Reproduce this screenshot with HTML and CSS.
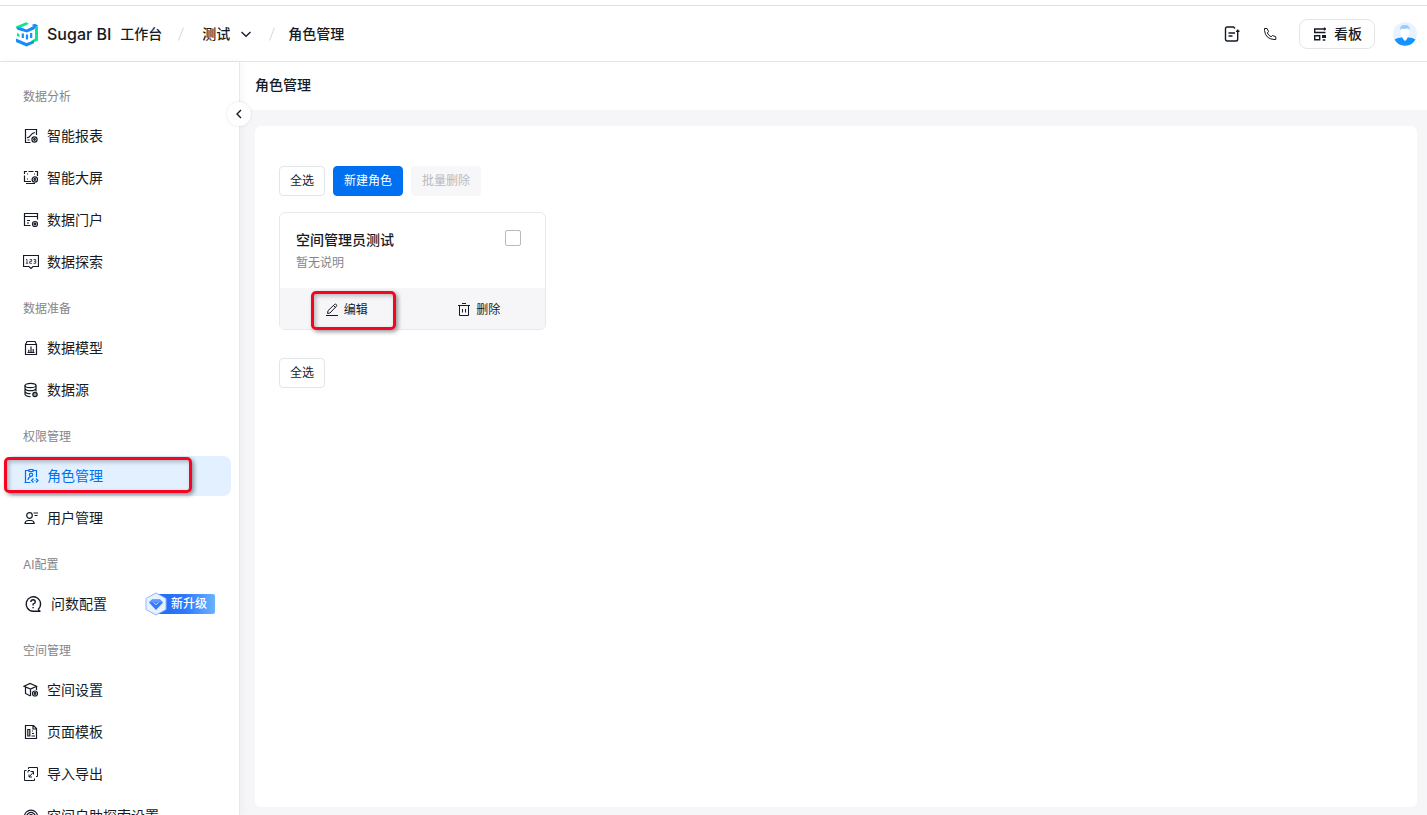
FILE: index.html
```html
<!DOCTYPE html>
<html lang="zh-CN">
<head>
<meta charset="utf-8">
<title>角色管理 - Sugar BI</title>
<link rel="stylesheet" href="styles.css">
</head>
<body>
<header class="topbar">
  <a class="brand" href="#">
    <svg class="logo" viewBox="0 0 24 26" width="24" height="26">
      <path d="M1 5.500 11 1.200 14 2.800 5 7 1 7.200z" fill="#0be592"/>
      <path d="M1.500 6.800 6 6.500 11.500 8.500 18.500 5 16.500 4 20 2.800 23 4.500 19 8.500 12 11.500 2.500 8.800z" fill="#168cff"/>
      <path d="M20 6.500 23 5V19.500L16 22.500V20L20 17.500z" fill="#0be592"/>
      <path d="M2 12 4.500 13.200V16L2 15z" fill="#0be592"/>
      <path d="M7.800 12.500V17M12 13.500V18.500M16.200 12V17" stroke="#168cff" stroke-width="2.200"/>
      <path d="M1 17.500 11.500 22 19 19.500V22.300L11.500 25.500 1 21z" fill="#168cff"/>
    </svg>
    <span class="brand-name">Sugar BI</span><span class="brand-area">工作台</span>
  </a>
  <nav class="crumbs" aria-label="面包屑">
    <svg class="slash" viewBox="0 0 6 14" width="6" height="14"><path d="M5.500.5.500 13.500"/></svg>
    <button class="space-switch" type="button">测试
      <svg class="icon" viewBox="0 0 12 12" width="12" height="12"><path d="M1.500 4 6 8.300 10.500 4"/></svg>
    </button>
    <svg class="slash" viewBox="0 0 6 14" width="6" height="14"><path d="M5.500.5.500 13.500"/></svg>
    <a class="crumb" href="#">角色管理</a>
  </nav>
  <div class="tools">
    <button class="tool" type="button" aria-label="文档">
      <svg class="icon bold" viewBox="0 0 16 16" width="16" height="16"><path d="M13.700 7v6.200q0 1.800-1.800 1.800H3.300q-1.800 0-1.800-1.800V2.800Q1.500 1 3.300 1H9.500L11 2.500M4.500 7h6.500M4.500 10h4M12 5.200h3.500M13.700 3.500v4"/></svg>
    </button>
    <button class="tool" type="button" aria-label="电话">
      <svg class="icon" viewBox="0 0 16 16" width="16" height="16"><path d="M2.500 2.500h2.600L6.500 5.500 5.300 7q1.300 2.500 3.800 3.800L10.500 9.500l3.300 1.300v2.700H12Q3.500 13 2.500 4.500z"/></svg>
    </button>
    <button class="board" type="button">
      <svg class="icon bold" viewBox="0 0 14 14" width="14" height="14"><path d="M13 2H1.700V5.500H12.500M11.500.5v3M1.700 8.700h5v4h-5zM9.700 8.700h2.600v1.600H9.700zM9.700 13h2.600"/></svg>
      看板
    </button>
    <button class="avatar" type="button" aria-label="账户">
      <svg viewBox="0 0 24 24" width="24" height="24"><circle cx="12" cy="12" r="12" fill="#e9f2ff"/><path d="M1.500 17.500Q5 15.300 9 15.500l3 3 3-3q4-.2 7.500 2A12 12 0 0 1 1.500 17.500z" fill="#1492ff"/><path d="M7.500 7h9v4q-.5 3.500-2.500 4.500V17L12 19 10 17v-1.500Q8 14.500 7.500 11z" fill="#fff"/><path d="M7.500 8.500Q6 3 11.500 3q6-.5 5 5.500l-1.500-2.300Q11 7.500 8.500 6.500z" fill="#9acbff"/></svg>
    </button>
  </div>
</header>

<div class="layout">
  <aside class="sidebar">
    <nav class="menu" aria-label="主菜单">
      <h2 class="group">数据分析</h2>
      <a class="item" href="#"><svg class="icon menu-icon" viewBox="0 0 16 16" width="16" height="16"><path d="M7.500 14.500h-5v-13h11V7M4 9.500q2 .5 3.500-2T12 4.500M4.500 12H6.500"/><circle cx="11.500" cy="11.500" r="2.600"/><circle cx="11.500" cy="11.500" r=".8"/></svg>智能报表</a>
      <a class="item" href="#"><svg class="icon menu-icon" viewBox="0 0 16 16" width="16" height="16"><path d="M1.500 4V1.500H4M12 1.500h2.500V6M5.500 1.500h5M1.500 5.500v6H8M4 4h1M11 4h1M4 9h1M3 13.500h9"/><circle cx="11.800" cy="9.500" r="2.700"/><circle cx="11.800" cy="9.500" r=".8"/></svg>智能大屏</a>
      <a class="item" href="#"><svg class="icon menu-icon" viewBox="0 0 16 16" width="16" height="16"><path d="M7.500 13.500h-6v-12h13V7.500M1.500 4.500h13M4 8.500h3M4 11h2"/><circle cx="12" cy="12" r="2.500"/><circle cx="12" cy="12" r=".8"/></svg>数据门户</a>
      <a class="item" href="#"><svg class="icon menu-icon" viewBox="0 0 16 16" width="16" height="16"><path d="M.5 1.500h15v11h-5.500L8 14.500 6 12.500H.5z"/><path class="fine" d="M3 5.500h1V9M2.800 9.300h2.400M6.700 5.500h2v1.800h-2v2h2.200M10.500 5.500h2.200v3.800h-2.200M11 7.300h1.500"/></svg>数据探索</a>

      <h2 class="group">数据准备</h2>
      <a class="item" href="#"><svg class="icon menu-icon" viewBox="0 0 16 16" width="16" height="16"><path d="M2.500 4.500h11v10h-11zM2.500 4.500 4 1.500h8l1.500 3M4.500 12.500h7M5.800 12V9.800M8 12V6.500M10.200 12V9"/></svg>数据模型</a>
      <a class="item" href="#"><svg class="icon menu-icon" viewBox="0 0 16 16" width="16" height="16"><ellipse cx="7.500" cy="3.500" rx="5.500" ry="2.200"/><path d="M2 3.500v9q1 2 5.500 2.200M13 3.500v6M2 6.500q1 2.200 5.500 2.200T13 6.500M2 9.500q1 2.200 5.500 2.200"/><circle cx="12" cy="12.500" r="2.200" fill="#9ca1a9"/></svg>数据源</a>

      <h2 class="group">权限管理</h2>
      <a class="item active" href="#" aria-current="page"><svg class="icon menu-icon" viewBox="0 0 16 16" width="16" height="16"><path d="M7.500 14.500h-6M2.500 14V2.500H6M10 2.500h3.500V9M6 1.500h4v2H6zM5 12q.2-3 3-3.500"/><circle cx="8" cy="6.800" r="1.600"/><path d="M10.500 10.500 8.500 12.500l2 2M13 10.500l2 2-2 2M11.500 12.500h.8"/></svg>角色管理<span class="mark mark-menu"></span></a>
      <a class="item" href="#"><svg class="icon menu-icon" viewBox="0 0 16 16" width="16" height="16"><circle cx="6.500" cy="5.500" r="2.800"/><path d="M2 13.500q.3-3 3.200-3h2.800q2.900 0 3.200 3zM10.500 3h4.500M11.500 5.500h3"/></svg>用户管理</a>

      <h2 class="group">AI配置</h2>
      <a class="item wide" href="#"><svg class="icon bold" viewBox="0 0 20 20" width="20" height="20"><path d="M15 15.500A7.200 7.200 0 1 0 10 17.200h7.500M15 15.500l2 1.500M7.800 8q.2-2.300 2.300-2.300T12.300 8q0 1.300-2.200 2.200v1.300M10.100 13v1.200"/></svg>问数配置
        <span class="upgrade"><svg class="gem" viewBox="0 0 22 24" width="22" height="24"><path d="M11 1 21 6.500v11L11 23 1 17.500v-11z" fill="#e9f1ff" stroke="#8eb8ff"/><path d="M7 7.500h8l3 3-7 7.500-7-7.500z" fill="#3478ff"/><path d="M4 10.500h14l-3-3H7z" fill="#5c98ff"/><path d="M8.500 10.500 11 12.800l2.500-2.300" fill="none" stroke="#bcd4ff"/></svg>新升级</span>
      </a>

      <h2 class="group">空间管理</h2>
      <a class="item" href="#"><svg class="icon menu-icon" viewBox="0 0 16 16" width="16" height="16"><path d="M7.500 14 2.500 11.500V5M1 4.200 7 1.500l6.500 2.700L7.500 7zM7.500 7v7M13.500 4.500V8"/><circle cx="12" cy="11.500" r="2.500"/><circle cx="12" cy="11.500" r=".8"/></svg>空间设置</a>
      <a class="item" href="#"><svg class="icon menu-icon" viewBox="0 0 16 16" width="16" height="16"><path d="M2.500 1.500h8l3 3v10h-11zM10 1.500v3.500h3.500M4.800 5.500h2v6.500h-2zM9 7h1M9 9.500h2M8.500 12h3.500"/></svg>页面模板</a>
      <a class="item" href="#"><svg class="icon" viewBox="0 0 16 16" width="16" height="16"><path d="M5.500 3V1.500h9v9H13M3.500 4.500h-2v10h10v-2M5 5v1.500M5 4.500H7M6 11l4.500-5M7.500 5.500h3v3M6 8.500V11h3"/></svg>导入导出</a>
      <a class="item" href="#"><svg class="icon menu-icon" viewBox="0 0 16 16" width="16" height="16"><path d="M3 13A6.600 6.600 0 1 1 13 13M4.500 11A4.200 4.200 0 1 1 11.500 11"/><circle cx="8" cy="8.500" r="1.800"/></svg>空间自助探索设置</a>
    </nav>
    <button class="collapse" type="button" aria-label="收起菜单"><svg class="icon bold" viewBox="0 0 12 12" width="12" height="12"><path d="M8 2 4 6l4 4"/></svg></button>
  </aside>

  <main class="main">
    <h1 class="title">角色管理</h1>
    <div class="content">
      <section class="panel">
        <div class="actions">
          <button class="btn" type="button">全选</button>
          <button class="btn primary" type="button">新建角色</button>
          <button class="btn" type="button" disabled>批量删除</button>
        </div>
        <article class="card">
          <div class="card-body">
            <div>
              <label class="card-name" for="role">空间管理员测试</label>
              <p class="card-note">暂无说明</p>
            </div>
            <input class="check" type="checkbox" id="role">
          </div>
          <footer class="card-foot">
            <button class="act" type="button"><svg class="icon" viewBox="0 0 14 14" width="14" height="14"><path d="M1 12.500h12M2.500 10.500 3 7.700 9.500 1.500q1-.8 1.800 0t0 1.800L5 10zM8.500 2.500l2 2"/></svg>编辑<span class="mark mark-edit"></span></button>
            <button class="act" type="button"><svg class="icon" viewBox="0 0 14 14" width="14" height="14"><path d="M1 2.500h12M5 .5h4M2.500 2.500v10h9v-10M5.500 6v3.500M8.500 6v3.500"/></svg>删除</button>
          </footer>
        </article>
        <div class="actions"><button class="btn" type="button">全选</button></div>
      </section>
    </div>
  </main>
</div>
</body>
</html>
```

FILE: styles.css
```css
* { box-sizing: border-box; }

body {
  margin: 0;
  height: 100vh;
  padding-top: 5px;
  display: flex;
  flex-direction: column;
  overflow: hidden;
  background: #fff;
  color: #151b26;
  font: 14px/20px Inter, "Noto Sans CJK SC", sans-serif;
}

a { color: inherit; text-decoration: none; }
button { margin: 0; padding: 0; border: 0; background: none; color: inherit; font: inherit; cursor: pointer; }
h1, h2, p { margin: 0; }
svg { display: block; flex: none; }
.icon { fill: none; stroke: currentColor; stroke-width: 1; }
.icon.bold { stroke-width: 1.4; }
.menu-icon { stroke-width: 1.2; }
.icon .fine { stroke-width: 0.8; }

/* Top bar */
.topbar {
  flex: none;
  display: flex;
  align-items: center;
  height: 57px;
  padding: 0 10px 0 15px;
  border-top: 1px solid #dfe0e2;
  border-bottom: 1px solid #e4e5e7;
  font-weight: 500;
}
.brand { display: flex; align-items: center; }
.brand-name { margin: 0 9px 0 8px; font-size: 16px; }
.crumbs { display: flex; align-items: center; margin-left: 16px; }
.slash { fill: none; stroke: #d4d6d9; }
.space-switch { display: flex; align-items: center; gap: 10px; margin: 0 17px 0 18px; }
.space-switch .icon { stroke-width: 1.3; }
.crumb { margin-left: 13px; }
.tools { display: flex; align-items: center; margin-left: auto; }
.tool { margin-right: 22px; }
.tool + .board { margin-left: -1px; }
.board {
  display: flex;
  align-items: center;
  gap: 7px;
  height: 30px;
  padding: 0 12px 0 13px;
  border: 1px solid #e4e5e7;
  border-radius: 8px;
}
.avatar { margin-left: 18px; }

/* Side menu */
.layout { flex: 1; min-height: 0; display: flex; }
.sidebar {
  position: relative;
  z-index: 1;
  flex: none;
  width: 240px;
  background: #fff;
  border-right: 1px solid #e8e9eb;
  box-shadow: 2px 0 8px rgba(0, 0, 0, 0.04);
}
.menu { height: 100%; padding: 10px 8px 0 7px; overflow: hidden; }
.group { height: 44px; padding: 15px 0 0 16px; color: #84868c; font-size: 12px; font-weight: 400; }
.item {
  position: relative;
  display: flex;
  align-items: center;
  gap: 8px;
  height: 40px;
  margin-bottom: 2px;
  padding: 0 16px;
  border-radius: 8px;
}
.item.active { background: #e2f0ff; color: #0070f0; }
.upgrade {
  position: relative;
  margin-left: auto;
  padding: 0 8px 0 26px;
  background: linear-gradient(90deg, #2468f2, #2d78ff 50%, #68b3ff) right / calc(100% - 10px) 100% no-repeat;
  border-radius: 2px;
  color: #fff;
  font-size: 12px;
  font-weight: 500;
}
.gem { position: absolute; left: 0; top: -2px; }
.collapse {
  position: absolute;
  top: 40px;
  right: -12px;
  display: grid;
  place-items: center;
  width: 24px;
  height: 24px;
  border-radius: 50%;
  background: #fff;
  box-shadow: 0 0 3px rgba(0, 0, 0, 0.12);
}

/* Callout frames */
.mark {
  position: absolute;
  border: 3px solid #f5051f;
  border-radius: 5px;
  box-shadow: 2px 2px 4px rgba(0, 0, 0, 0.4), inset 2px 2px 4px rgba(0, 0, 0, 0.25);
  pointer-events: none;
}
.mark-menu { top: 1px; bottom: 3px; left: -3px; right: 39px; }
.mark-edit { top: 3px; bottom: -1px; left: 31px; right: 17px; }

/* Page */
.main { flex: 1; min-width: 0; display: flex; flex-direction: column; background: #f6f6f9; }
.title { flex: none; padding: 13px 15px 15px; background: #fff; font-size: 14px; font-weight: 500; }
.content { flex: 1; display: flex; padding: 16px 10px 8px 15px; }
.panel { flex: 1; padding: 40px 24px; background: #fff; border-radius: 6px; }
.actions { display: flex; gap: 8px; }
.btn {
  height: 30px;
  padding: 0 10px;
  border: 1px solid #e4e5e7;
  border-radius: 4px;
  background: #fff;
  font-size: 12px;
}
.btn.primary { border-color: #0070f0; background: #0070f0; color: #fff; }
.btn:disabled { border-color: #f7f7f9; background: #f7f7f9; color: #b8babf; }
.card { width: 267px; margin: 16px 0 28px; border: 1px solid #e8e9eb; border-radius: 6px; }
.card-body { display: flex; justify-content: space-between; padding: 17px 24px 15px 16px; }
.card-name { display: block; font-weight: 500; }
.card-note { padding-top: 3px; color: #84868c; font-size: 12px; }
.check { appearance: none; width: 16px; height: 16px; margin: 0; border: 1px solid #b8babf; border-radius: 2px; }
.card-foot { display: flex; height: 41px; background: #f6f6f9; border-radius: 0 0 5px 5px; }
.act { position: relative; flex: 1; display: flex; align-items: center; justify-content: center; gap: 5px; padding-top: 3px; font-size: 12px; }
```
